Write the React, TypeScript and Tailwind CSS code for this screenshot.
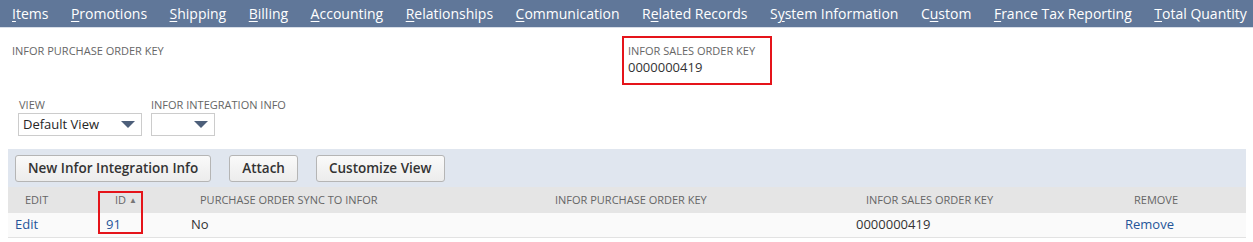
import React from "react";

const TABS: { pre: string; key: string; post: string }[] = [
  { pre: "", key: "I", post: "tems" },
  { pre: "", key: "P", post: "romotions" },
  { pre: "", key: "S", post: "hipping" },
  { pre: "", key: "B", post: "illing" },
  { pre: "", key: "A", post: "ccounting" },
  { pre: "", key: "R", post: "elationships" },
  { pre: "", key: "C", post: "ommunication" },
  { pre: "R", key: "e", post: "lated Records" },
  { pre: "S", key: "y", post: "stem Information" },
  { pre: "C", key: "u", post: "stom" },
  { pre: "", key: "F", post: "rance Tax Reporting" },
  { pre: "", key: "T", post: "otal Quantity" },
];

const COLS = "grid-cols-[91px_85px_354px_311px_268px_128px]";

function Select({ value, width }: { value: string; width: string }) {
  return (
    <div
      className={`flex h-[23px] items-center justify-between border border-[#cccccc] bg-white pl-[4px] pr-[6px] text-[13px] text-[#262626] ${width}`}
    >
      <span>{value}</span>
      <svg width="14" height="8" viewBox="0 0 14 8">
        <path d="M0 0 L14 0 L7 7 Z" fill="#4d5f7a" />
      </svg>
    </div>
  );
}

function Button({ children }: { children: React.ReactNode }) {
  return (
    <button className="h-[27px] rounded-[3px] border border-[#b5b5b5] bg-gradient-to-b from-[#fafafa] to-[#ececec] px-[12px] text-[13.5px] font-semibold text-[#333333]">
      {children}
    </button>
  );
}

export default function App() {
  return (
    <div className="h-[242px] w-[1253px] overflow-hidden bg-white" style={{ fontFamily: "'Open Sans', 'Liberation Sans', sans-serif" }}>
      <div className="flex h-[28px] items-center gap-[22.5px] whitespace-nowrap border-b border-[#d8dee8] bg-[#607799] pl-[12px] text-[14px] text-white">
        {TABS.map((t) => (
          <span key={t.pre + t.key + t.post}>
            {t.pre}
            <u className="underline-offset-2">{t.key}</u>
            {t.post}
          </span>
        ))}
      </div>

      <div className="flex pt-[8px]">
        <div className="w-[622px] pl-[12px] pt-[8px] text-[11px] leading-[14px] text-[#666666]">INFOR PURCHASE ORDER KEY</div>
        <div className="h-[49px] w-[150px] border-2 border-[#e5141a] px-[4px] pt-[6px]">
          <div className="text-[11px] leading-[14px] text-[#666666]">INFOR SALES ORDER KEY</div>
          <div className="text-[13px] leading-[18px] text-[#333333]">0000000419</div>
        </div>
      </div>

      <div className="flex gap-[9px] pl-[18px] pt-[12px]">
        <div>
          <div className="pl-[1px] text-[11px] leading-[16px] text-[#666666]">VIEW</div>
          <Select value="Default View" width="w-[124px]" />
        </div>
        <div>
          <div className="text-[11px] leading-[16px] text-[#666666]">INFOR INTEGRATION INFO</div>
          <Select value="" width="w-[64px]" />
        </div>
      </div>

      <div className="mx-[8px] mt-[13px] w-[1238px]">
        <div className="flex h-[38px] items-center gap-[18px] bg-[#e0e6ef] pl-[7px]">
          <Button>New Infor Integration Info</Button>
          <Button>Attach</Button>
          <Button>Customize View</Button>
        </div>
        <div className={`grid h-[26px] ${COLS} items-center bg-[#e5e5e5] text-[11px] text-[#666666]`}>
          <div className="pl-[17px]">EDIT</div>
          <div className="relative flex h-full items-center pl-[16px]">
            <span>ID</span>
            <span className="ml-[3px] text-[8px] text-[#777777]">▲</span>
            <div className="absolute left-[-1px] top-[4px] h-[43px] w-[45px] border-2 border-[#e5141a]" />
          </div>
          <div className="pl-[16px]">PURCHASE ORDER SYNC TO INFOR</div>
          <div className="pl-[17px]">INFOR PURCHASE ORDER KEY</div>
          <div className="pl-[17px]">INFOR SALES ORDER KEY</div>
          <div className="pl-[17px]">REMOVE</div>
        </div>
        <div className={`grid h-[25px] ${COLS} items-center border-b border-[#e2e2e2] bg-[#fafafa] text-[13px] text-[#333333]`}>
          <div className="pl-[7px] text-[#255599]">Edit</div>
          <div className="pl-[7px] text-[#255599]">91</div>
          <div className="pl-[7px]">No</div>
          <div className="pl-[7px]"></div>
          <div className="pl-[7px]">0000000419</div>
          <div className="pl-[8px] text-[#255599]">Remove</div>
        </div>
      </div>
    </div>
  );
}
